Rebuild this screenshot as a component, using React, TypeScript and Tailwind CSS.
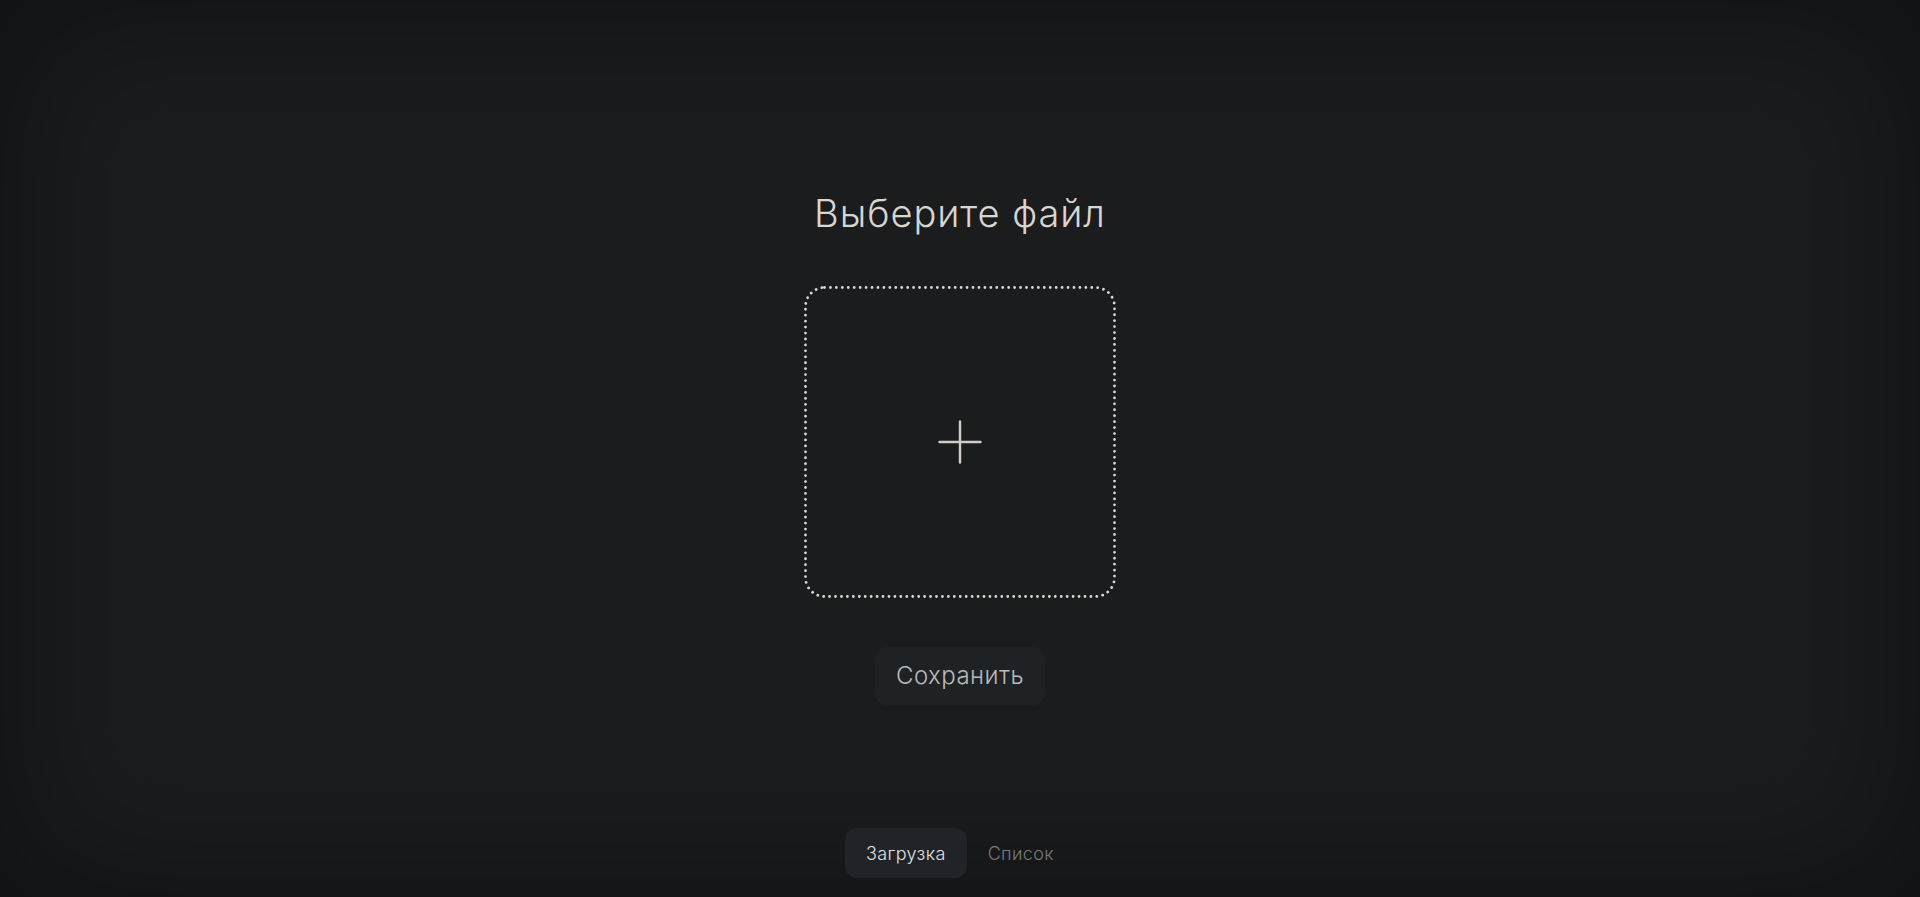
import React from "react";

export default function App() {
  return (
    <div
      className="w-full h-[897px] bg-[#1b1c1e] shadow-[inset_0_0_160px_rgba(0,0,0,0.45)] flex flex-col items-center overflow-hidden"
      style={{ fontFamily: "Inter, 'Noto Sans', sans-serif" }}
    >
      <div className="flex flex-col items-center pt-[189px]">
        <h1 className="text-[38px] leading-[48px] font-light text-[#d8d6d0] tracking-[0.025em]">
          Выберите файл
        </h1>
        <button className="relative mt-[49px] w-[312px] h-[312px] rounded-[20px] flex items-center justify-center">
          <svg className="absolute inset-0" width="312" height="312" viewBox="0 0 312 312">
            <rect
              x="1.5"
              y="1.5"
              width="309"
              height="309"
              rx="19"
              fill="none"
              stroke="#dad8d2"
              strokeWidth="2.8"
              strokeLinecap="round"
              strokeDasharray="0.01 5.93"
            />
          </svg>
          <svg width="44" height="44" viewBox="0 0 44 44">
            <path d="M22 1.5v41M1.5 22h41" stroke="#d0cdc6" strokeWidth="2.4" strokeLinecap="round" />
          </svg>
        </button>
        <button className="mt-[49px] w-[170px] h-[58px] rounded-[12px] bg-[#1f2225] text-[24px] font-light text-[#bababa] tracking-[0.02em]">
          Сохранить
        </button>
      </div>
      <div className="mt-auto mb-[19px] flex items-center">
        <button className="h-[50px] px-[21px] rounded-[12px] bg-[#202327] text-[18px] font-light text-[#e2e2e2] tracking-[0.02em]">
          Загрузка
        </button>
        <button className="h-[50px] px-[21px] rounded-[12px] text-[18px] font-light text-[#7a7a7a] tracking-[0.02em]">
          Список
        </button>
      </div>
    </div>
  );
}
